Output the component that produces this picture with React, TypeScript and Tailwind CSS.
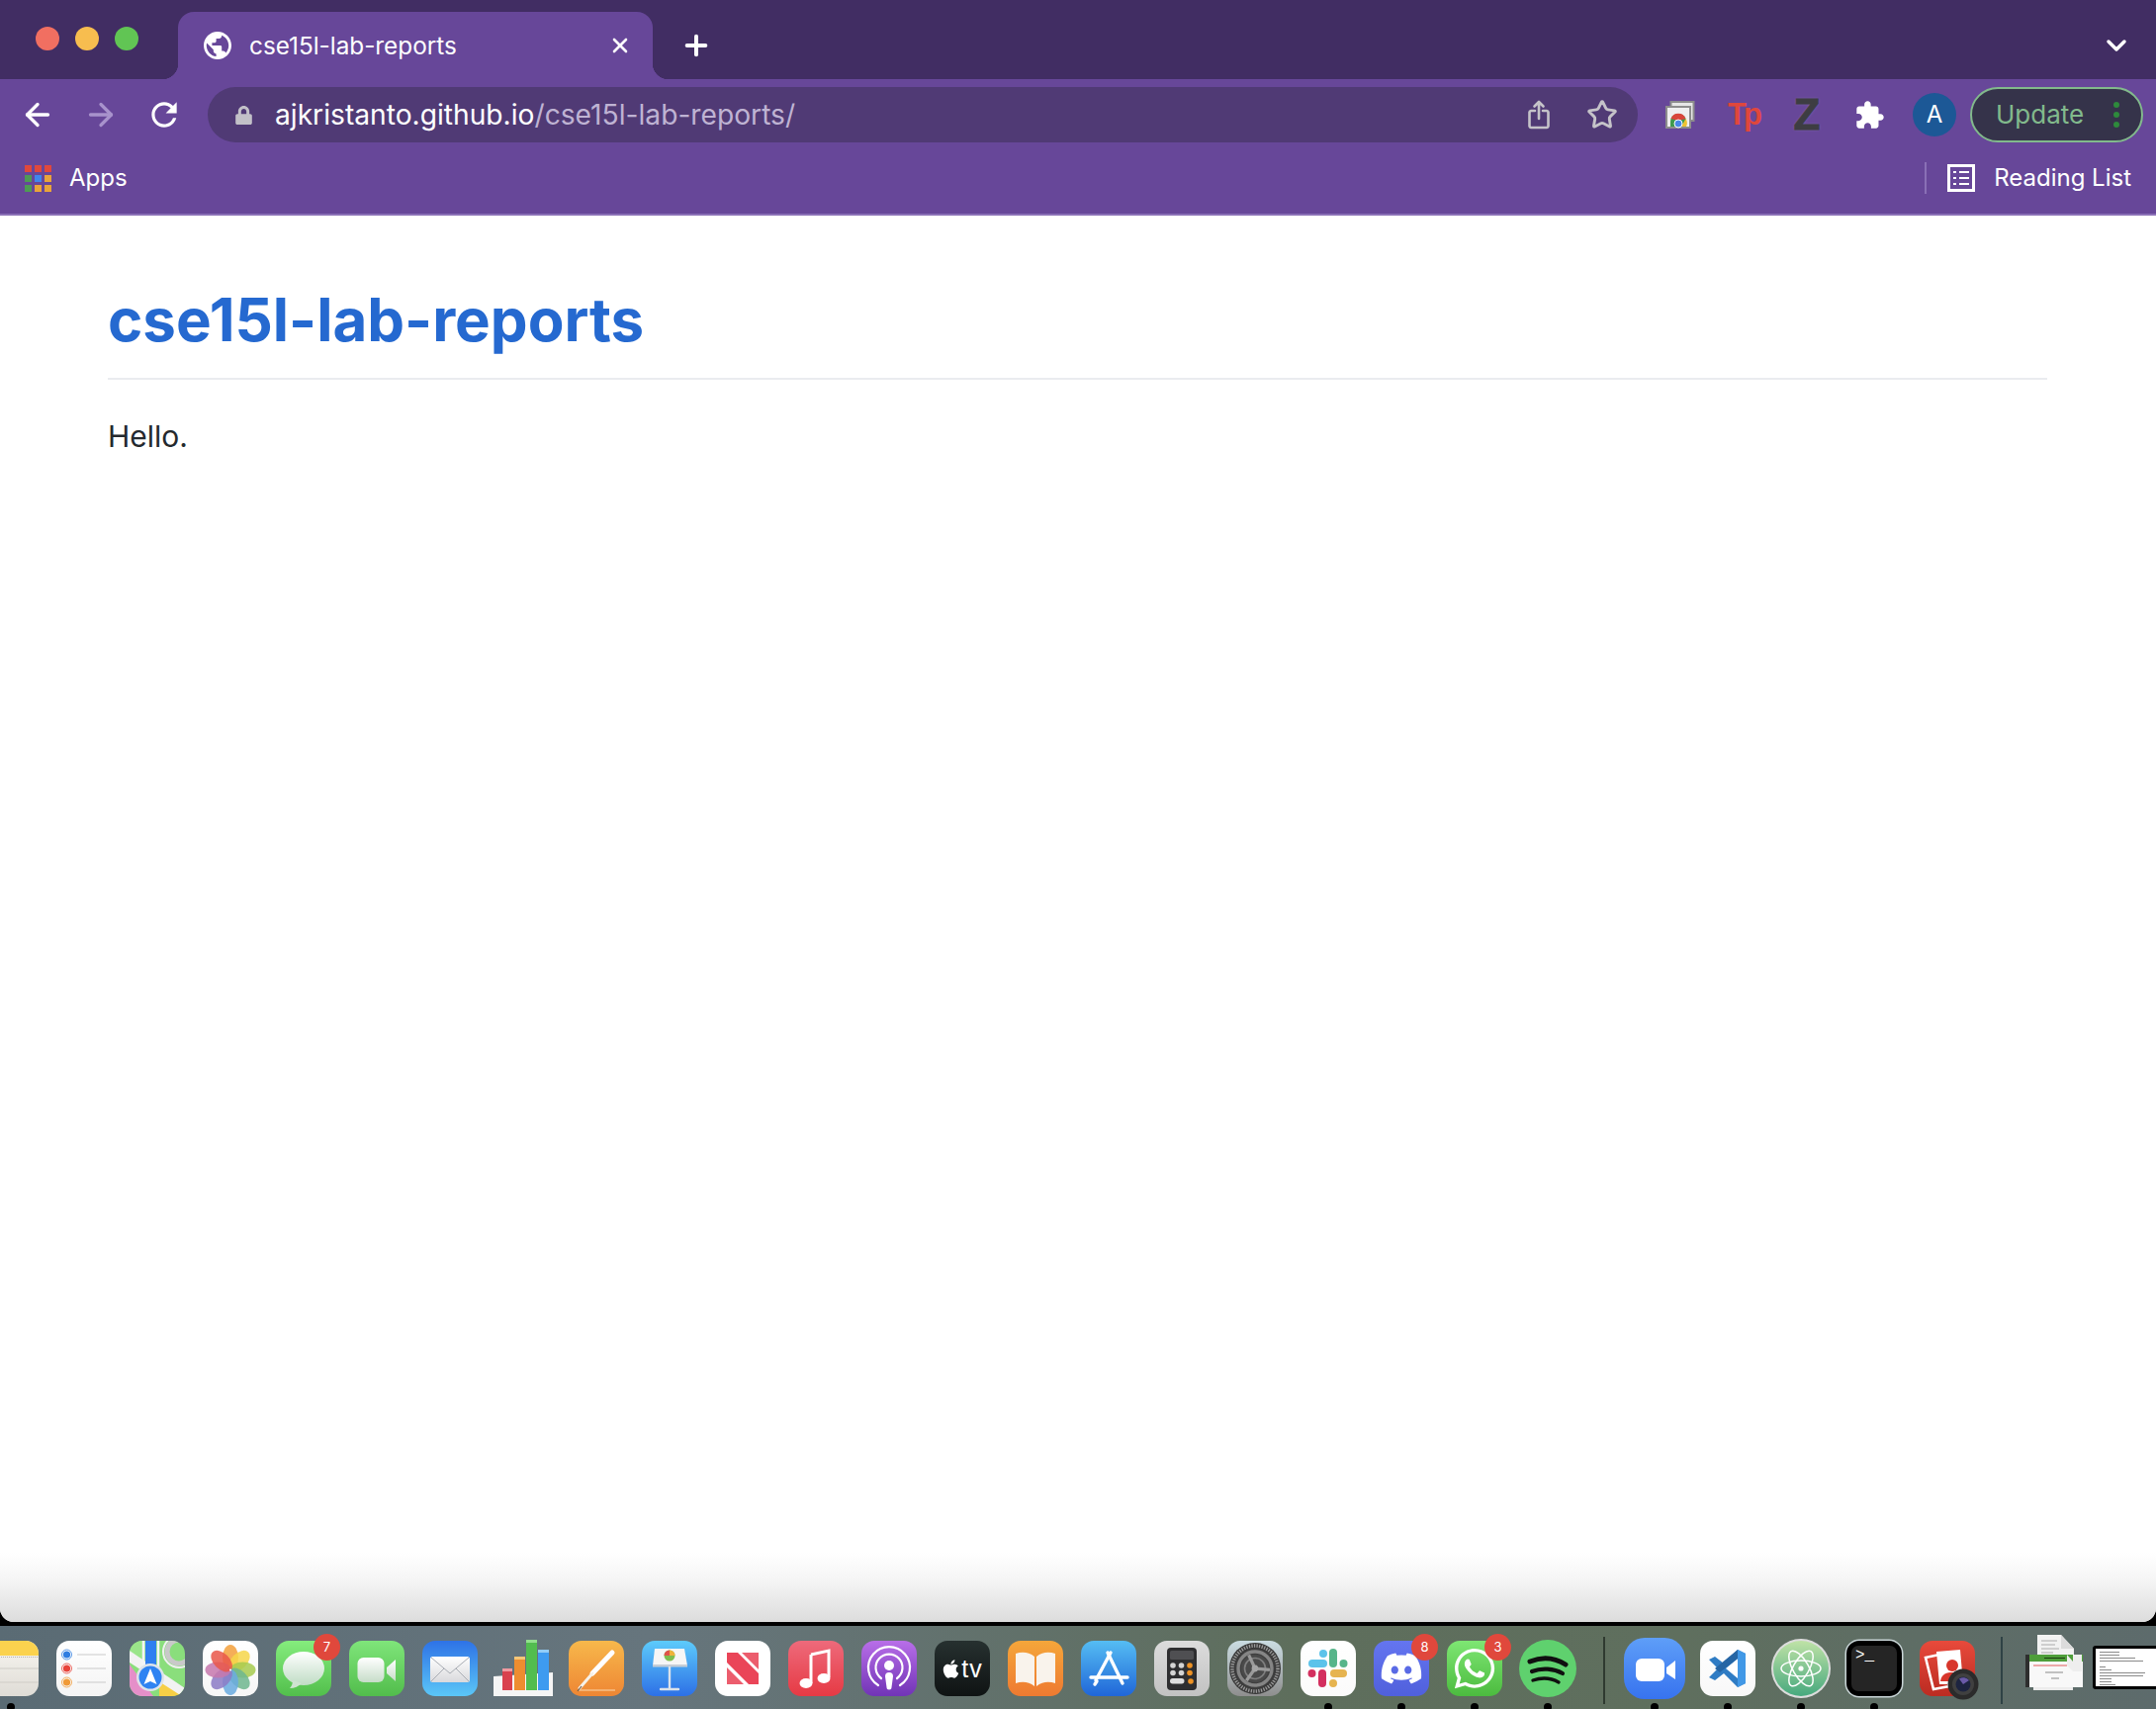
import React from "react";
import { ArrowLeft, ArrowRight, Plus, X, ChevronDown, Star } from "lucide-react";
import { FaApple, FaDiscord, FaWhatsapp, FaLock } from "react-icons/fa";

const sans = "font-['Inter','Liberation_Sans',sans-serif]";

function Grad({ id, a, b, x2 = 0, y2 = 1 }: { id: string; a: string; b: string; x2?: number; y2?: number }) {
  return (
    <linearGradient id={id} x1="0" y1="0" x2={x2} y2={y2}>
      <stop offset="0" stopColor={a} />
      <stop offset="1" stopColor={b} />
    </linearGradient>
  );
}

function S({ children }: { children: React.ReactNode }) {
  return (
    <svg viewBox="0 0 56 56" className="block h-14 w-14 overflow-visible">
      {children}
    </svg>
  );
}

function Sq({ id, a, b, children }: { id: string; a: string; b: string; children?: React.ReactNode }) {
  return (
    <S>
      <defs>
        <Grad id={id} a={a} b={b} />
      </defs>
      <rect width="56" height="56" rx="13" fill={`url(#${id})`} />
      {children}
    </S>
  );
}

function Dock({ badge, dot, children }: { badge?: string; dot?: boolean; children: React.ReactNode }) {
  return (
    <div className="relative h-14 w-14 shrink-0">
      {children}
      {badge && (
        <span className={`absolute -top-[7px] right-[-9px] flex h-[27px] w-[27px] items-center justify-center rounded-full bg-[#e0483c] text-[13px] text-white ${sans}`}>
          {badge}
        </span>
      )}
      {dot && <span className="absolute left-[24px] top-[63px] h-2 w-2 rounded-full bg-black" />}
    </div>
  );
}

const Notes = () => (
  <S>
    <defs>
      <Grad id="notes" a="#f8f6f1" b="#dfdcd6" />
    </defs>
    <rect width="56" height="56" rx="13" fill="url(#notes)" />
    <path d="M0 15V13A13 13 0 0 1 13 0H43A13 13 0 0 1 56 13V15Z" fill="#fbd24e" />
    <path d="M0 16.5H56" stroke="#b9b5ac" strokeWidth="1" strokeDasharray="1 1" />
    <path d="M0 28H56M0 42H56" stroke="#cfccc6" strokeWidth="1" />
  </S>
);

const Reminders = () => (
  <Sq id="rem" a="#ffffff" b="#f4f4f4">
    <path d="M21 14H50M21 28H50M21 42H50" stroke="#c9c9c9" strokeWidth="1.2" />
    <circle cx="10.5" cy="14" r="5" fill="none" stroke="#2f7de1" strokeWidth="0.8" />
    <circle cx="10.5" cy="14" r="3.6" fill="#2f7de1" />
    <circle cx="10.5" cy="28" r="5" fill="none" stroke="#e8423a" strokeWidth="0.8" />
    <circle cx="10.5" cy="28" r="3.6" fill="#e8423a" />
    <circle cx="10.5" cy="42" r="5" fill="none" stroke="#f09a37" strokeWidth="0.8" />
    <circle cx="10.5" cy="42" r="3.6" fill="#f09a37" />
  </Sq>
);

const Maps = () => (
  <S>
    <defs>
      <clipPath id="mapc">
        <rect width="56" height="56" rx="13" />
      </clipPath>
    </defs>
    <g clipPath="url(#mapc)">
      <rect width="56" height="56" fill="#8ade7c" />
      <path d="M0 0H16V24L0 14Z" fill="#9be58a" />
      <path d="M0 24L24 56H0Z" fill="#e58fc9" />
      <path d="M30 56V38L56 56Z" fill="#f7cf46" />
      <path d="M0 10L56 48V58L0 22Z" fill="#f2f2f2" />
      <rect x="16" y="0" width="11" height="30" fill="#2f7ef0" />
      <path d="M14 0V30M29 0V30" stroke="#f4f4f4" strokeWidth="2.5" />
      <circle cx="50" cy="11" r="12" fill="none" stroke="#c9c9c9" strokeWidth="5" />
      <circle cx="50" cy="11" r="16" fill="none" stroke="#efefef" strokeWidth="2" />
    </g>
    <circle cx="21" cy="37" r="14" fill="#dde3ea" />
    <circle cx="21" cy="37" r="11.5" fill="#2f83f2" />
    <path d="M21 28L27.5 44L21 41L14.5 44Z" fill="#fff" />
  </S>
);

const Photos = () => {
  const p: [number, string][] = [
    [0, "#f3a13c"], [45, "#f6d64a"], [90, "#a6cb4f"], [135, "#6fb78f"],
    [180, "#6aabe0"], [225, "#8c7cc6"], [270, "#c678ae"], [315, "#e9574a"],
  ];
  return (
    <Sq id="pho" a="#ffffff" b="#f6f6f6">
      {p.map(([r, c]) => (
        <ellipse key={r} cx="28" cy="17" rx="8" ry="13" fill={c} opacity="0.86" transform={`rotate(${r} 28 29.5)`} />
      ))}
      <circle cx="28" cy="29.5" r="1" fill="#fff" />
    </Sq>
  );
};

const Messages = () => (
  <Sq id="msg" a="#85ec7d" b="#52bf4c">
    <defs>
      <Grad id="msgb" a="#ffffff" b="#bfdcc4" />
    </defs>
    <ellipse cx="28" cy="28" rx="21" ry="17" fill="url(#msgb)" />
    <path d="M17 40C17 43 16 46 14 48C19 48 23 46 26 43Z" fill="#cfe3d1" />
  </Sq>
);

const FaceTime = () => (
  <Sq id="ft" a="#7fe57a" b="#52bd4c">
    <defs>
      <Grad id="ftb" a="#ffffff" b="#c6dcc8" />
    </defs>
    <rect x="8.5" y="17" width="27" height="25" rx="6" fill="url(#ftb)" />
    <path d="M38 27L47 19V41L38 33Z" fill="url(#ftb)" />
  </Sq>
);

const Mail = () => (
  <Sq id="ml" a="#2e72e6" b="#5bc6f7">
    <defs>
      <Grad id="mlb" a="#ffffff" b="#d9d9dc" />
    </defs>
    <rect x="8" y="16" width="40" height="26" rx="2.5" fill="url(#mlb)" />
    <path d="M9 17L28 33L47 17M9 41L22 28M47 41L34 28" fill="none" stroke="#a9adb4" strokeWidth="1" />
  </Sq>
);

const Numbers = () => (
  <S>
    <path d="M-2 36L58 32V56H-2Z" fill="#f5f5f5" />
    <rect x="7" y="28" width="10" height="22" fill="#d9414e" />
    <rect x="7" y="28" width="10" height="3" fill="#ef9aa0" />
    <rect x="19" y="16" width="11" height="34" fill="#ee8d30" />
    <rect x="19" y="16" width="11" height="3" fill="#f7c677" />
    <rect x="31" y="-1" width="11" height="51" fill="#52bd4f" />
    <rect x="31" y="-1" width="11" height="3" fill="#93e08e" />
    <rect x="43" y="9" width="11" height="41" fill="#3e9bf0" />
    <rect x="43" y="9" width="11" height="3" fill="#93cdf7" />
  </S>
);

const Pages = () => (
  <Sq id="pg" a="#f7b84b" b="#ee8634">
    <path d="M24 33L44 12" stroke="#fff" strokeWidth="5" strokeLinecap="round" />
    <path d="M24 33L11 48" stroke="#f6f1e8" strokeWidth="3" strokeLinecap="round" />
    <path d="M10 50H47" stroke="#f9d9b2" strokeWidth="1.2" />
    <path d="M9 51L13 46" stroke="#6b5a49" strokeWidth="1.2" />
  </Sq>
);

const Keynote = () => (
  <Sq id="kn" a="#5dcbfb" b="#2d70e6">
    <path d="M13 8H43L46 25H11Z" fill="#f6f6f6" />
    <rect x="11" y="24" width="35" height="2.5" fill="#c5cdd6" />
    <path d="M28 26V48" stroke="#dbe2ea" strokeWidth="2.4" />
    <path d="M19 49H37" stroke="#dbe2ea" strokeWidth="2.4" strokeLinecap="round" />
    <circle cx="28" cy="15" r="5.5" fill="#7fbd4f" />
    <path d="M28 15V9.5A5.5 5.5 0 0 1 33.5 15Z" fill="#f0b23a" />
    <path d="M28 15L22.5 15A5.5 5.5 0 0 1 28 9.5Z" fill="#e0534a" />
  </Sq>
);

const News = () => (
  <Sq id="nw" a="#ffffff" b="#ffffff">
    <path d="M12 12H23L44 33V44H34L12 22Z" fill="#ea4558" />
    <path d="M27 12H44V29Z" fill="#ec5d6d" />
    <path d="M12 27L29 44H12Z" fill="#ec5d6d" />
  </Sq>
);

const Music = () => (
  <Sq id="mu" a="#ee6a7b" b="#e63a44">
    <path d="M23 14L41 10V37" fill="none" stroke="#fff" strokeWidth="3" />
    <path d="M23 14V43" fill="none" stroke="#fff" strokeWidth="3" />
    <ellipse cx="18" cy="43" rx="6.5" ry="5" fill="#fff" />
    <ellipse cx="36" cy="38" rx="6.5" ry="5" fill="#fff" />
  </Sq>
);

const Podcasts = () => (
  <Sq id="pod" a="#b86ee8" b="#7134b6">
    <g fill="none" stroke="#fff" strokeLinecap="round">
      <path d="M17 45A21 21 0 1 1 39 45" strokeWidth="2.2" />
      <path d="M20 38A13.5 13.5 0 1 1 36 38" strokeWidth="2.2" />
    </g>
    <circle cx="28" cy="25" r="5" fill="#fff" />
    <path d="M24 36A4 4 0 0 1 32 36L30.5 47A2.5 2.5 0 0 1 25.5 47Z" fill="#fff" />
  </Sq>
);

const Tv = () => (
  <div className="flex h-14 w-14 items-center justify-center rounded-[13px] bg-[linear-gradient(#26302f,#0f1313)] text-white">
    <FaApple className="h-[21px] w-[19px]" />
    <span className="ml-[1px] font-['Liberation_Sans',sans-serif] text-[25px] leading-none tracking-[1px]">tv</span>
  </div>
);

const Books = () => (
  <Sq id="bk" a="#f5a63a" b="#ee7a31">
    <path d="M27 16C21 11 14 11 8 13V43C14 41 21 41 27 46Z" fill="#f9f3ec" />
    <path d="M29 16C35 11 42 11 48 13V43C42 41 35 41 29 46Z" fill="#f9f3ec" />
  </Sq>
);

const AppStore = () => (
  <Sq id="as" a="#55bdf3" b="#2066d8">
    <g stroke="#fff" strokeWidth="3.4" strokeLinecap="round" fill="none">
      <path d="M30 12L15 40" />
      <path d="M27 12L42 43" />
      <path d="M10 37H47" />
      <path d="M14 44L16 41" />
    </g>
  </Sq>
);

const Calculator = () => {
  const b = ["#d4d4d4", "#d4d4d4", "#ee9224", "#d4d4d4", "#d4d4d4", "#ee9224", "#d4d4d4", "#d4d4d4", "#ee9224"];
  return (
    <Sq id="cal" a="#dcdcdc" b="#c2c2c2">
      <rect x="13" y="7" width="30" height="43" rx="4" fill="#2e2e30" />
      <rect x="16" y="10" width="24" height="9" rx="1.5" fill="#4f4f52" />
      {b.slice(0, 6).map((c, i) => (
        <circle key={i} cx={19 + (i % 3) * 8.5} cy={25 + Math.floor(i / 3) * 7.5} r="2.8" fill={c} />
      ))}
      <rect x="16" y="38" width="14.5" height="5.5" rx="2.7" fill="#dedede" />
      <circle cx="37" cy="41" r="2.8" fill="#ee9224" />
    </Sq>
  );
};

const Settings = () => (
  <Sq id="sys" a="#cbdde3" b="#8e8e8e">
    <circle cx="28" cy="28" r="26" fill="#3a3a3a" />
    <circle cx="28" cy="28" r="23" fill="none" stroke="#9a9a9a" strokeWidth="3.5" strokeDasharray="1.3 1.3" />
    <circle cx="28" cy="28" r="20" fill="#3f3f3f" />
    <circle cx="28" cy="28" r="17" fill="none" stroke="#858585" strokeWidth="3.4" />
    <circle cx="28" cy="28" r="14" fill="#4a4a4a" />
    <circle cx="28" cy="28" r="10.5" fill="none" stroke="#7f7f7f" strokeWidth="1.6" />
    <g stroke="#9a9a9a" strokeWidth="3.2" transform="rotate(-25 28 28)">
      <path d="M28 28V13" />
      <path d="M28 28L41 35.5" />
      <path d="M28 28L15 35.5" />
    </g>
    <circle cx="28" cy="28" r="3.4" fill="#a5a5a5" />
  </Sq>
);

const Slack = () => (
  <Sq id="sl" a="#ffffff" b="#fbfbfb">
    <g strokeWidth="8" strokeLinecap="round" fill="none">
      <path d="M12 23H23" stroke="#5bc3ea" />
      <path d="M33 12V23" stroke="#57b58a" />
      <path d="M34 33H43" stroke="#e6b450" />
      <path d="M22 33V43" stroke="#d32f5f" />
    </g>
    <circle cx="23" cy="13" r="4" fill="#5bc3ea" />
    <circle cx="43.5" cy="23" r="4" fill="#57b58a" />
    <circle cx="33" cy="43" r="4" fill="#e6b450" />
    <circle cx="11.5" cy="33" r="4" fill="#d32f5f" />
  </Sq>
);

const Discord = () => (
  <div className="flex h-14 w-14 items-center justify-center rounded-[13px] bg-[linear-gradient(#6475f0,#5060dc)] text-white">
    <FaDiscord className="h-[44px] w-[44px]" />
  </div>
);

const WhatsApp = () => (
  <div className="flex h-14 w-14 items-center justify-center rounded-[13px] bg-[linear-gradient(#7ee673,#4cbb3f)] text-white">
    <FaWhatsapp className="h-[46px] w-[46px]" />
  </div>
);

const Spotify = () => (
  <S>
    <circle cx="28" cy="28" r="29" fill="#5fd16e" />
    <g fill="none" stroke="#101010" strokeLinecap="round">
      <path d="M10 21C22 16 35 17 46 24" strokeWidth="5" />
      <path d="M12 31C22 27 34 28 43 33" strokeWidth="4.2" />
      <path d="M13 40C22 37 32 38 39 42" strokeWidth="3.4" />
    </g>
  </S>
);

const ZoomApp = () => (
  <S>
    <defs>
      <Grad id="zm" a="#5e9ef8" b="#3773ef" />
    </defs>
    <rect x="-3" y="-3" width="62" height="62" rx="21" fill="url(#zm)" />
    <rect x="9" y="18" width="29" height="23" rx="6" fill="#fff" />
    <path d="M40 27L49 20V39L40 33Z" fill="#fff" />
  </S>
);

const VSCode = () => (
  <Sq id="vs" a="#ffffff" b="#f8f8f8">
    <path d="M38 9L46 13V43L38 47L24 33L15 40L9 37L18 28L9 19L15 16L24 23Z" fill="#2f7cc4" />
    <path d="M38 9L46 13V43L38 47Z" fill="#4198e6" />
    <path d="M38 18V38L26 28Z" fill="#fff" />
    <path d="M38 9L38 18L20 32L15 28Z" fill="#2565a4" />
  </Sq>
);

const Atom = () => (
  <S>
    <defs>
      <Grad id="at" a="#bfe2a6" b="#47a97e" />
    </defs>
    <circle cx="28" cy="28" r="30" fill="#dcdcdc" />
    <circle cx="28" cy="28" r="28" fill="url(#at)" />
    <g fill="none" stroke="#fff" strokeWidth="1.5">
      <ellipse cx="28" cy="28" rx="20" ry="8" />
      <ellipse cx="28" cy="28" rx="20" ry="8" transform="rotate(60 28 28)" />
      <ellipse cx="28" cy="28" rx="20" ry="8" transform="rotate(120 28 28)" />
    </g>
    <circle cx="28" cy="28" r="2.6" fill="#fff" />
  </S>
);

const Terminal = () => (
  <div className="relative h-14 w-14 rounded-[13px] bg-black p-[5px] shadow-[0_0_0_1.5px_#c8d4d6]">
    <div className="h-full w-full rounded-[7px] bg-[#252525] px-[4px] font-['Liberation_Mono',monospace] text-[16px] leading-[20px] text-white">
      {">_"}
    </div>
  </div>
);

const PhotoBooth = () => (
  <S>
    <defs>
      <Grad id="pb" a="#e84a3b" b="#bb2b22" />
    </defs>
    <rect width="56" height="56" rx="13" fill="url(#pb)" />
    <path d="M6 17L20 14L30 46L14 49Z" fill="none" stroke="#fff" strokeWidth="2.6" />
    <path d="M17 11L41 9L44 44L20 44Z" fill="#fff" />
    <circle cx="33" cy="25" r="6" fill="#d8362c" />
    <path d="M21 41C22 33 28 32 33 32C39 32 43 35 43 41Z" fill="#d8362c" />
    <circle cx="44" cy="44" r="15.5" fill="#2b2b2b" />
    <circle cx="44" cy="44" r="11" fill="#404040" />
    <circle cx="44" cy="44" r="7.5" fill="#1d2440" />
    <path d="M44 44L40 38.5A7.5 7.5 0 0 1 50 40Z" fill="#6a5aa8" />
  </S>
);

const DocThumb = () => (
  <svg viewBox="0 0 58 58" className="block h-[58px] w-[58px] overflow-visible">
    <path d="M12 -6H36L49 8V18H12Z" fill="#f2f2f2" />
    <path d="M36 -6V8H49Z" fill="#dcdcdc" />
    <path d="M16 0H32M16 4H30M16 8H34M16 12H28" stroke="#9a9a9a" strokeWidth="0.8" />
    <rect x="8" y="45" width="40" height="5" fill="#ececec" />
    <rect x="0" y="14" width="4" height="33" fill="#2e2e2e" />
    <rect x="4" y="14" width="54" height="33" fill="#f8f8f8" />
    <rect x="4" y="14" width="54" height="7" fill="#4e9e3a" />
    <path d="M19 17.5H40" stroke="#1d3d12" strokeWidth="1" />
    <path d="M8 25H42" stroke="#e05a5a" strokeWidth="1" />
    <path d="M20 32H38M26 38H34" stroke="#8a8a8a" strokeWidth="1" />
    <path d="M42 14H57V31H48L42 25Z" fill="#eeeeee" />
    <path d="M42 14L48 21V14Z" fill="#4e9e3a" />
  </svg>
);

const WinThumb = () => {
  const rows = [20, 20, 36, 44, 0, 6, 12, 46, 44, 12, 12, 16];
  return (
    <div className="h-[44px] w-[70px] shrink-0 overflow-hidden rounded-[3px] border-[3px] border-black bg-white pl-[3px] pt-[3px]">
      {rows.map((w, i) => (
        <div key={i} className="mb-[2px] ml-px h-px bg-[#8a8a8a]" style={{ width: w }} />
      ))}
    </div>
  );
};

export default function App() {
  return (
    <div className={`flex h-[1728px] w-[2180px] flex-col overflow-hidden bg-black ${sans}`}>
      <div className="flex min-h-0 flex-1 flex-col overflow-hidden rounded-b-[14px] bg-white">
        {/* tab strip */}
        <div className="flex h-20 shrink-0 items-end bg-[#412d63]">
          <div className="flex h-full w-[180px] shrink-0 items-center gap-4 pb-[2px] pl-9">
            <span className="h-6 w-6 rounded-full bg-[#f16f61]" />
            <span className="h-6 w-6 rounded-full bg-[#f7bd4f]" />
            <span className="h-6 w-6 rounded-full bg-[#61c554]" />
          </div>
          <div className="relative flex h-[68px] w-[480px] shrink-0 items-center rounded-t-[16px] bg-[#674799] pl-[26px] pr-[21px] text-white">
            <span className="absolute -left-4 bottom-0 h-4 w-4 bg-[radial-gradient(circle_at_0_0,#412d63_16px,#674799_16.5px)]" />
            <span className="absolute -right-4 bottom-0 h-4 w-4 bg-[radial-gradient(circle_at_100%_0,#412d63_16px,#674799_16.5px)]" />
            <svg viewBox="2 2 20 20" className="h-7 w-7 shrink-0" fill="#fff">
              <path d="M12 2C6.48 2 2 6.48 2 12s4.48 10 10 10 10-4.48 10-10S17.52 2 12 2zm-1 17.93c-3.95-.49-7-3.85-7-7.93 0-.62.08-1.21.21-1.79L9 15v1c0 1.1.9 2 2 2v1.93zm6.9-2.54c-.26-.81-1-1.39-1.9-1.39h-1v-3c0-.55-.45-1-1-1H8v-2h2c.55 0 1-.45 1-1V7h2c1.1 0 2-.9 2-2v-.41c2.93 1.19 5 4.06 5 7.41 0 2.08-.8 3.97-2.1 5.39z" />
            </svg>
            <span className="ml-[18px] flex-1 text-[24.3px] leading-none">cse15l-lab-reports</span>
            <X className="h-6 w-6" strokeWidth={2.6} />
          </div>
          <div className="flex h-[68px] w-[88px] shrink-0 items-center justify-center text-white">
            <Plus className="h-8 w-8" strokeWidth={3} />
          </div>
          <div className="flex h-[68px] flex-1 items-center justify-end pr-6 text-white">
            <ChevronDown className="h-8 w-8" strokeWidth={2.6} />
          </div>
        </div>

        {/* toolbar */}
        <div className="flex h-[72px] shrink-0 items-center bg-[#674799] pl-[6px]">
          <div className="flex h-14 w-16 items-center justify-center text-white">
            <ArrowLeft className="h-9 w-9" strokeWidth={2.2} />
          </div>
          <div className="flex h-14 w-16 items-center justify-center text-[#a893cc]">
            <ArrowRight className="h-9 w-9" strokeWidth={2.2} />
          </div>
          <div className="flex h-14 w-16 items-center justify-center text-white">
            <svg viewBox="0 0 24 24" className="h-[38px] w-[38px]" fill="#fff">
              <path d="M17.65 6.35C16.2 4.9 14.21 4 12 4c-4.42 0-7.99 3.58-7.99 8s3.57 8 7.99 8c3.73 0 6.84-2.55 7.73-6h-2.08c-.82 2.33-3.04 4-5.65 4-3.31 0-6-2.69-6-6s2.69-6 6-6c1.66 0 3.14.69 4.22 1.78L13 11h7V4l-2.35 2.35z" />
            </svg>
          </div>
          <div className="ml-3 flex h-14 w-[1446px] shrink-0 items-center rounded-full bg-[#503a75] pl-[28px] pr-4">
            <FaLock className="h-[19px] w-[17px] text-[#c2c0c8]" />
            <div className="ml-[23px] flex-1 text-[28.2px] leading-none text-white">
              ajkristanto.github.io<span className="text-[#bfb3d3]">/cse15l-lab-reports/</span>
            </div>
            <div className="flex w-10 items-center justify-center">
              <svg viewBox="0 0 22 30" className="h-[30px] w-[22px]" fill="none" stroke="#c5c3c9" strokeWidth="2.6" strokeLinecap="round" strokeLinejoin="round">
                <path d="M7 11H3A1.8 1.8 0 0 0 1.5 13V26.5A1.8 1.8 0 0 0 3 28H19A1.8 1.8 0 0 0 20.5 26.5V13A1.8 1.8 0 0 0 19 11H15" />
                <path d="M11 19V2M6.5 6.5L11 2L15.5 6.5" />
              </svg>
            </div>
            <div className="ml-6 flex w-10 items-center justify-center text-[#c5c3c9]">
              <Star className="h-8 w-8" strokeWidth={2.2} />
            </div>
          </div>

          <div className="ml-[11px] flex h-14 w-16 items-center justify-center">
            <svg viewBox="0 0 30 28" className="h-7 w-[30px]">
              <rect x="5.5" y="1" width="23" height="19" fill="#e6e6e6" stroke="#8d8d8d" strokeWidth="2" />
              <rect x="1" y="6" width="24" height="21" fill="#efefef" stroke="#8d8d8d" strokeWidth="2" />
              <path d="M5 26V21A8 8 0 0 1 21 21V26Z" fill="#3f9a4e" />
              <path d="M5.5 18A8 8 0 0 1 20.5 18L13 20Z" fill="#d9453a" />
              <path d="M20.5 18A8 8 0 0 1 21 26H16Z" fill="#f0c330" />
              <circle cx="13" cy="23" r="4" fill="#4a88e8" stroke="#fff" strokeWidth="1" />
            </svg>
          </div>
          <div className="flex h-14 w-16 items-center justify-center">
            <span className="pb-[2px] font-['Liberation_Sans',sans-serif] text-[31px] font-bold leading-none tracking-[-3px] text-[#e0473c]">Tp</span>
          </div>
          <div className="flex h-14 w-16 items-center justify-center">
            <span className="font-['Liberation_Sans',sans-serif] text-[44px] font-bold leading-none text-[#3d3d42] [-webkit-text-stroke:1px_#3d3d42] [text-shadow:0_0_3px_#8a70b6]">Z</span>
          </div>
          <div className="flex h-14 w-16 items-center justify-center">
            <svg viewBox="1 0 23 23" className="h-[30px] w-[30px]" fill="#fff">
              <path d="M20.5 11H19V7c0-1.1-.9-2-2-2h-4V3.5C13 2.12 11.88 1 10.5 1S8 2.12 8 3.5V5H4c-1.1 0-1.99.9-1.99 2v3.8H3.5c1.49 0 2.7 1.21 2.7 2.7s-1.21 2.7-2.7 2.7H2V20c0 1.1.9 2 2 2h3.8v-1.5c0-1.49 1.21-2.7 2.7-2.7 1.49 0 2.7 1.21 2.7 2.7V22H17c1.1 0 2-.9 2-2v-4h1.5c1.38 0 2.5-1.12 2.5-2.5S21.88 11 20.5 11z" />
            </svg>
          </div>
          <div className="flex h-14 w-[66px] items-center justify-center">
            <span className="flex h-11 w-11 items-center justify-center rounded-full bg-[#1c5896] text-[24px] leading-none text-white">A</span>
          </div>
          <div className="ml-[3px] flex h-14 w-[175px] shrink-0 items-center rounded-full border-2 border-[#82ba8c] bg-[#35334a] pl-[24px]">
            <span className="text-[26px] leading-none text-[#82ba8c]">Update</span>
            <span className="ml-[30px] flex flex-col gap-[4px]">
              <span className="h-[6px] w-[6px] rounded-full bg-[#2e8a3c]" />
              <span className="h-[6px] w-[6px] rounded-full bg-[#2e8a3c]" />
              <span className="h-[6px] w-[6px] rounded-full bg-[#2e8a3c]" />
            </span>
          </div>
        </div>

        {/* bookmarks */}
        <div className="flex h-[66px] shrink-0 items-start border-b-2 border-[#8a70b6] bg-[#674799] pl-[25px] pr-[25px]">
          <div className="flex h-14 flex-1 items-center text-white">
            <div className="grid w-[26px] grid-cols-[repeat(3,7px)] gap-[3px]">
              {["#e0483c", "#e0483c", "#e0483c", "#4f9a55", "#3f86ec", "#e9a43a", "#4f9a55", "#e9a43a", "#e9a43a"].map((c, i) => (
                <span key={i} className="h-[7px] w-[7px]" style={{ background: c }} />
              ))}
            </div>
            <span className="ml-[19px] text-[24px] leading-none">Apps</span>
            <span className="ml-auto h-8 w-[2px] bg-[#8a70b6]" />
            <svg viewBox="0 0 28 28" className="ml-[21px] h-7 w-7" fill="none" stroke="#fff">
              <rect x="1.5" y="1.5" width="25" height="25" strokeWidth="3" />
              <path d="M6 8H9M12 8H22M6 14H9M12 14H22M6 20H9M12 20H22" strokeWidth="2.2" />
            </svg>
            <span className="ml-[19px] text-[24px] leading-none">Reading List</span>
          </div>
        </div>

        {/* page */}
        <main className="flex min-h-0 flex-1 flex-col px-[110px] pt-[71px] text-[#24292e]">
          <h1 className="-ml-[1px] border-b-2 border-[#eaecef] pb-[25px] text-[60px] font-bold leading-[68px] text-[#2569d0]">
            cse15l-lab-reports
          </h1>
          <p className="mt-[39px] -ml-[1px] text-[30px] leading-[36px]">Hello.</p>
        </main>
        <div className="h-[70px] shrink-0 bg-[linear-gradient(#ffffff,#f5f5f5_40%,#dcdcdc)]" />
      </div>

      {/* dock */}
      <div className="mt-[4px] flex h-[84px] shrink-0 items-start gap-[18px] overflow-hidden bg-[linear-gradient(90deg,#5a6b74,#66757d_30%,#5e6e5c_60%,#5f6f5e_78%,#5d6b6c)] pt-[15px]">
        <div className="-ml-[17px]"><Dock dot><Notes /></Dock></div>
        <Dock><Reminders /></Dock>
        <Dock><Maps /></Dock>
        <Dock><Photos /></Dock>
        <Dock badge="7"><Messages /></Dock>
        <Dock><FaceTime /></Dock>
        <Dock><Mail /></Dock>
        <Dock><Numbers /></Dock>
        <Dock><Pages /></Dock>
        <Dock><Keynote /></Dock>
        <Dock><News /></Dock>
        <Dock><Music /></Dock>
        <Dock><Podcasts /></Dock>
        <Dock><Tv /></Dock>
        <Dock><Books /></Dock>
        <Dock><AppStore /></Dock>
        <Dock><Calculator /></Dock>
        <Dock><Settings /></Dock>
        <Dock dot><Slack /></Dock>
        <Dock dot badge="8"><Discord /></Dock>
        <Dock dot badge="3"><WhatsApp /></Dock>
        <Dock dot><Spotify /></Dock>
        <span className="ml-[10px] -mt-[4px] h-[68px] w-[2px] shrink-0 bg-[#2f3a30]" />
        <div className="ml-[4px]"><Dock dot><ZoomApp /></Dock></div>
        <Dock dot><VSCode /></Dock>
        <Dock dot><Atom /></Dock>
        <Dock dot><Terminal /></Dock>
        <Dock><PhotoBooth /></Dock>
        <span className="ml-[8px] -mt-[4px] h-[68px] w-[2px] shrink-0 bg-[#2f4245]" />
        <div className="ml-[5px]"><DocThumb /></div>
        <div className="-ml-[8px] mt-[5px]"><WinThumb /></div>
      </div>
    </div>
  );
}
